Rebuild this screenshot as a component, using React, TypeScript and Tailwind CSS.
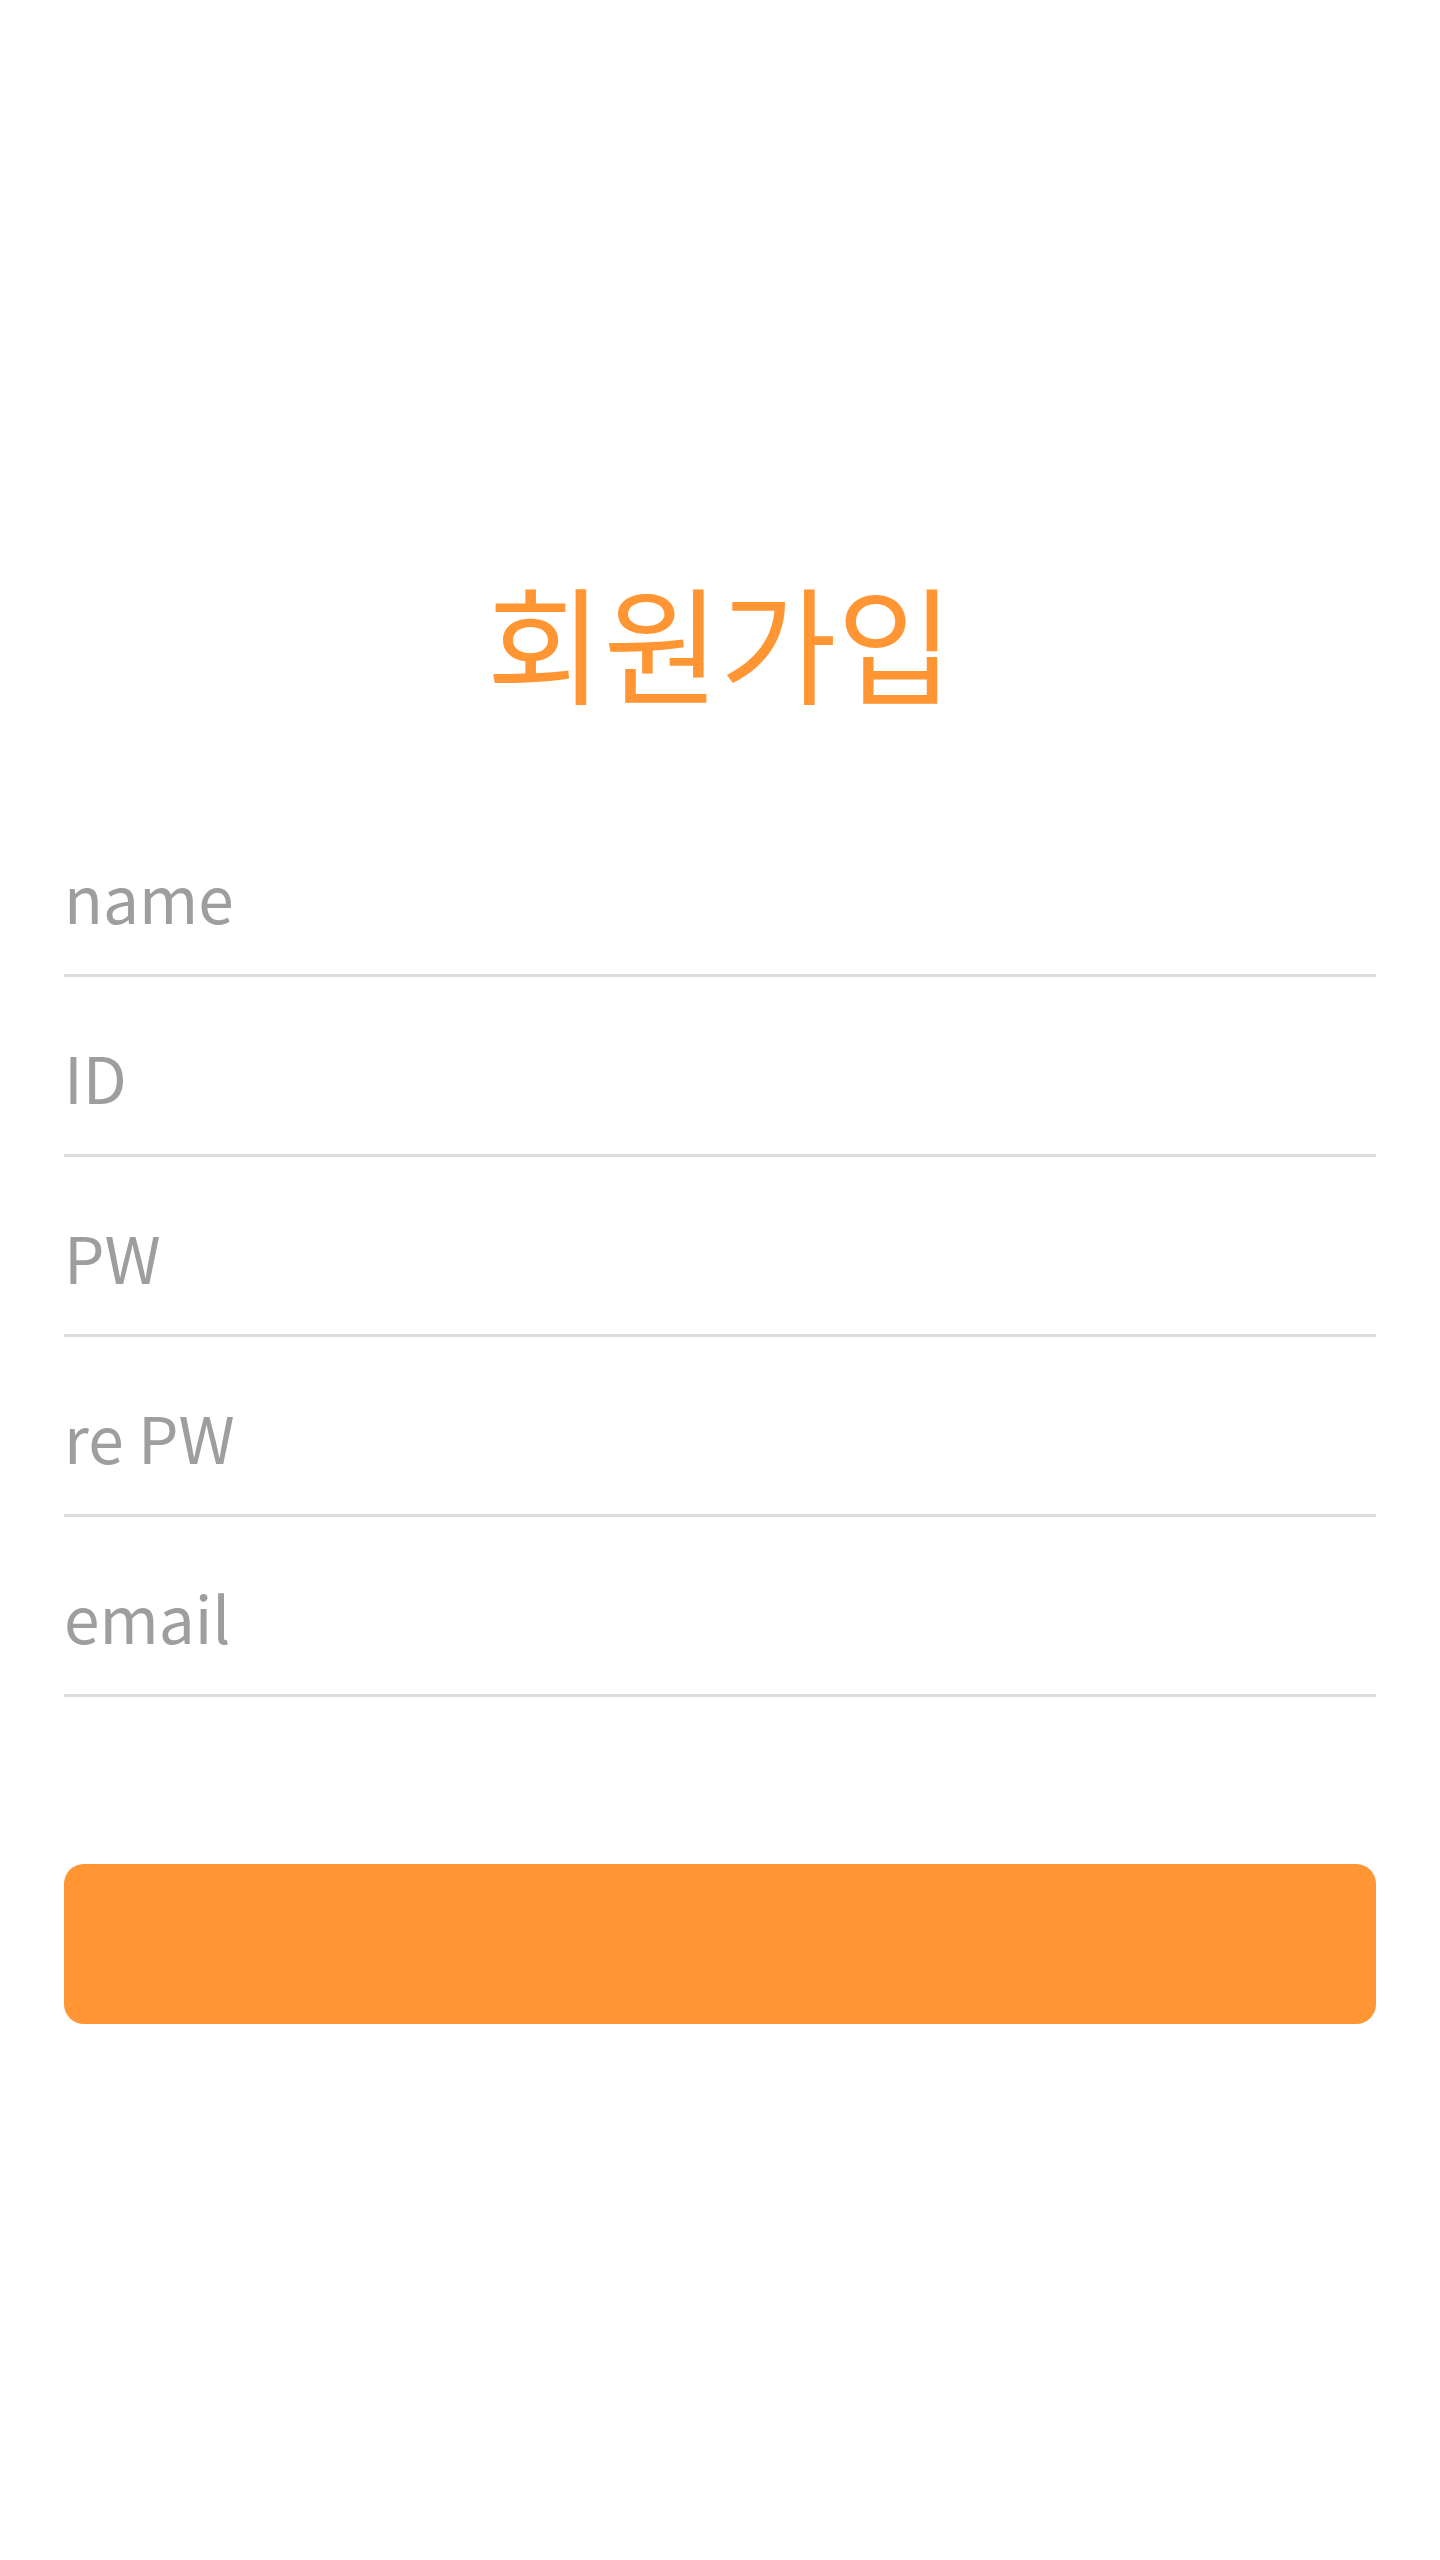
import React from "react";

const fields = [
  { name: "name", placeholder: "name", type: "text" },
  { name: "id", placeholder: "ID", type: "text" },
  { name: "pw", placeholder: "PW", type: "password" },
  { name: "repw", placeholder: "re PW", type: "password" },
  { name: "email", placeholder: "email", type: "email" },
];

export default function App() {
  return (
    <div
      className="min-h-screen bg-white px-16 pt-[560px] pb-20"
      style={{ fontFamily: '"Noto Sans CJK KR", "Noto Sans", sans-serif' }}
    >
      {/* Title */}
      <h1 className="text-center text-[127px] leading-[160px] font-normal text-[#ff9633]">
        회원가입
      </h1>

      {/* Form */}
      <form className="mt-[77px] flex flex-col">
        {fields.map((f) => (
          <input
            key={f.name}
            name={f.name}
            type={f.type}
            placeholder={f.placeholder}
            className="h-[180px] w-full border-b-[3px] border-[#dddddd] bg-transparent px-0 pt-[21px] text-[64px] font-normal text-[#333] outline-none placeholder:text-[#9e9e9e]"
          />
        ))}

        <button
          type="submit"
          className="mt-[167px] h-[160px] w-full rounded-[20px] bg-[#ff9633]"
        />
      </form>
    </div>
  );
}
